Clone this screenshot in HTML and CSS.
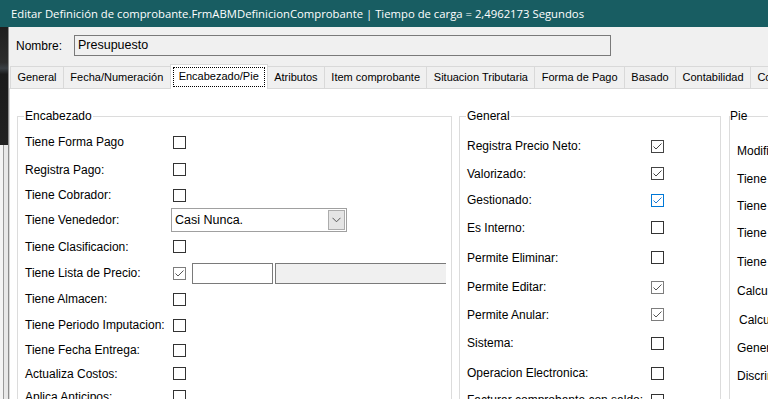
FILE: index.html
```html
<!DOCTYPE html>
<html lang="es">
<head>
    <meta charset="UTF-8">
    <title>Editar Definición de comprobante</title>
    <link rel="stylesheet" href="styles.css">
</head>
<body>
    <div class="titlebar">Editar Definición de comprobante.FrmABMDefinicionComprobante | Tiempo de carga = 2,4962173 Segundos</div>
    <div class="window">
        <div class="behind">
            <div class="behind-top"></div>
            <div class="behind-bottom"></div>
        </div>
        <div class="form">
            <div class="name-row">
                <span class="name-label">Nombre:</span>
                <div class="textbox readonly">Presupuesto</div>
            </div>

            <div class="tabs">
                <div class="tab">General</div>
                <div class="tab">Fecha/Numeración</div>
                <div class="tab active"><span class="focus">Encabezado/Pie</span></div>
                <div class="tab">Atributos</div>
                <div class="tab">Item comprobante</div>
                <div class="tab">Situacion Tributaria</div>
                <div class="tab">Forma de Pago</div>
                <div class="tab">Basado</div>
                <div class="tab">Contabilidad</div>
                <div class="tab">Comportamiento</div>
            </div>

            <div class="panel">
                <!-- Encabezado -->
                <fieldset class="group enc">
                    <legend>Encabezado</legend>
                    <div class="rows">
                        <div class="row"><span class="lbl">Tiene Forma Pago</span><span class="cb"></span></div>
                        <div class="row"><span class="lbl">Registra Pago:</span><span class="cb"></span></div>
                        <div class="row"><span class="lbl">Tiene Cobrador:</span><span class="cb"></span></div>
                        <div class="row">
                            <span class="lbl">Tiene Venededor:</span>
                            <div class="combo">
                                <span class="combo-text">Casi Nunca.</span>
                                <span class="combo-btn">
                                    <svg width="9" height="6" viewBox="0 0 9 6"><polyline points="0.5,0.8 4.5,4.8 8.5,0.8" fill="none" stroke="#555" stroke-width="1"/></svg>
                                </span>
                            </div>
                        </div>
                        <div class="row"><span class="lbl">Tiene Clasificacion:</span><span class="cb"></span></div>
                        <div class="row">
                            <span class="lbl">Tiene Lista de Precio:</span>
                            <span class="cb dim"><svg width="11" height="11" viewBox="0 0 11 11"><polyline points="1.5,5.5 4,8 9.5,2.5" fill="none" stroke="#555" stroke-width="1"/></svg></span>
                            <div class="textbox small"></div>
                            <div class="textbox wide readonly clipped"></div>
                        </div>
                        <div class="row"><span class="lbl">Tiene Almacen:</span><span class="cb"></span></div>
                        <div class="row"><span class="lbl">Tiene Periodo Imputacion:</span><span class="cb"></span></div>
                        <div class="row"><span class="lbl">Tiene Fecha Entrega:</span><span class="cb"></span></div>
                        <div class="row"><span class="lbl">Actualiza Costos:</span><span class="cb"></span></div>
                        <div class="row"><span class="lbl">Aplica Anticipos:</span><span class="cb"></span></div>
                    </div>
                </fieldset>

                <!-- General -->
                <fieldset class="group gen">
                    <legend>General</legend>
                    <div class="rows">
                        <div class="row"><span class="lbl">Registra Precio Neto:</span><span class="cb on"><svg width="11" height="11" viewBox="0 0 11 11"><polyline points="1.5,5.5 4,8 9.5,2.5" fill="none" stroke="#444" stroke-width="1"/></svg></span></div>
                        <div class="row"><span class="lbl">Valorizado:</span><span class="cb on"><svg width="11" height="11" viewBox="0 0 11 11"><polyline points="1.5,5.5 4,8 9.5,2.5" fill="none" stroke="#444" stroke-width="1"/></svg></span></div>
                        <div class="row"><span class="lbl">Gestionado:</span><span class="cb hot"><svg width="11" height="11" viewBox="0 0 11 11"><polyline points="1.5,5.5 4,8 9.5,2.5" fill="none" stroke="#1f7ad2" stroke-width="1"/></svg></span></div>
                        <div class="row"><span class="lbl">Es Interno:</span><span class="cb"></span></div>
                        <div class="row"><span class="lbl">Permite Eliminar:</span><span class="cb"></span></div>
                        <div class="row"><span class="lbl">Permite Editar:</span><span class="cb dim"><svg width="11" height="11" viewBox="0 0 11 11"><polyline points="1.5,5.5 4,8 9.5,2.5" fill="none" stroke="#555" stroke-width="1"/></svg></span></div>
                        <div class="row"><span class="lbl">Permite Anular:</span><span class="cb dim"><svg width="11" height="11" viewBox="0 0 11 11"><polyline points="1.5,5.5 4,8 9.5,2.5" fill="none" stroke="#555" stroke-width="1"/></svg></span></div>
                        <div class="row"><span class="lbl">Sistema:</span><span class="cb"></span></div>
                        <div class="row"><span class="lbl">Operacion Electronica:</span><span class="cb"></span></div>
                        <div class="row"><span class="lbl">Facturar comprobante con saldo:</span><span class="cb"></span></div>
                    </div>
                </fieldset>

                <!-- Pie -->
                <fieldset class="group pie">
                    <legend>Pie</legend>
                    <div class="rows">
                        <div class="row"><span class="lbl">Modifica Pie:</span></div>
                        <div class="row"><span class="lbl">Tiene Observaciones:</span></div>
                        <div class="row"><span class="lbl">Tiene Descuento:</span></div>
                        <div class="row"><span class="lbl">Tiene Recargo:</span></div>
                        <div class="row"><span class="lbl">Tiene Percepciones:</span></div>
                        <div class="row"><span class="lbl">Calcula Impuestos:</span></div>
                        <div class="row"><span class="lbl shift">Calcula Total:</span></div>
                        <div class="row"><span class="lbl">Genera Asiento:</span></div>
                        <div class="row"><span class="lbl">Discrimina IVA:</span></div>
                    </div>
                </fieldset>
            </div>
        </div>
    </div>
</body>
</html>
```

FILE: styles.css
```css
body {
    margin: 0;
    width: 768px;
    height: 399px;
    overflow: hidden;
    font-family: "Liberation Sans", Arial, sans-serif;
    font-size: 12px;
    color: #000;
    background: #f0f0f0;
}

.titlebar {
    height: 27px;
    line-height: 27px;
    padding-left: 11px;
    background: #185d62;
    color: #fff;
    font-family: "Open Sans", sans-serif;
    font-size: 11.3px;
    white-space: nowrap;
    overflow: hidden;
}

.window {
    display: flex;
    height: 372px;
}

/* la ventana de atras que asoma a la izquierda */
.behind {
    width: 9px;
    flex-shrink: 0;
    display: flex;
    flex-direction: column;
    border-right: 1px solid #8c8c8c;
    box-sizing: border-box;
}

.behind-top {
    height: 118px;
    background: linear-gradient(180deg, #1e1e1e 0%, #2c2c2c 30%, #3a3f44 35%, #1b1b1b 40%, #222 100%);
}

.behind-bottom {
    flex: 1;
    background: #e8e8e8;
    border-left: 3px solid #f4f4f4;
    box-shadow: inset 1px 0 0 #9a9a9a;
}

.form {
    flex: 1;
    min-width: 0;
    display: flex;
    flex-direction: column;
    background: #f0f0f0;
}

.name-row {
    height: 37px;
    display: flex;
    align-items: center;
    padding-left: 7px;
}

.name-label {
    width: 58px;
    flex-shrink: 0;
}

.textbox {
    box-sizing: border-box;
    height: 21px;
    border: 1px solid #7a7a7a;
    background: #fff;
    line-height: 19px;
    padding-left: 3px;
    font-size: 12.5px;
    flex-shrink: 0;
}

.textbox.readonly {
    background: #f0f0f0;
}

.name-row .textbox {
    width: 537px;
}

/* pestañas */
.tabs {
    height: 24px;
    display: flex;
    align-items: flex-end;
    padding-left: 1px;
    font-size: 11px;
    white-space: nowrap;
}

.tab {
    height: 22px;
    box-sizing: border-box;
    line-height: 21px;
    padding: 0 6.4px;
    border: 1px solid #d9d9d9;
    border-bottom: none;
    margin-right: -1px;
    background: #f0f0f0;
    flex-shrink: 0;
}

.tab.active {
    height: 25px;
    margin-bottom: -1px;
    padding: 0 2px;
    background: #fff;
    position: relative;
    z-index: 1;
    line-height: 1;
}

.tab .focus {
    display: inline-block;
    margin-top: 2px;
    padding: 3px 5px 4px;
    border: 1px dotted #000;
}

.panel {
    flex: 1;
    display: flex;
    align-items: flex-start;
    background: #fff;
    border-top: 1px solid #d9d9d9;
    border-left: 1px solid #d9d9d9;
    padding-top: 20px;
    overflow: hidden;
}

/* cajas de grupo */
.group {
    margin: 0;
    padding: 0;
    min-width: 0;
    flex-shrink: 0;
    height: 330px;
    box-sizing: border-box;
    border: 1px solid #dcdcdc;
    border-bottom: none;
}

.group legend {
    padding: 0 1px;
    margin-left: 6px;
    line-height: 14px;
    font-size: 12px;
}

.enc {
    margin-left: 7px;
    width: 435px;
}

.gen {
    margin-left: 7px;
    width: 262px;
}

.pie {
    margin-left: 8px;
    width: 200px;
}

.pie legend {
    margin-left: 0;
    padding: 0;
}

.rows {
    display: grid;
    padding-left: 7px;
}

.enc .rows {
    margin-top: 5px;
    grid-template-rows: 28px 27px 24px 26px 27px 26px 26px 26px 24px 23px 23px;
}

.gen .rows {
    margin-top: 9px;
    grid-template-rows: 28px 27px 26px 29px 31px 28px 27px 30px 30px 24px;
}

.pie .rows {
    margin-top: 14px;
    grid-template-rows: 28px 27px 27px 28px 29px 29px 29px 28px 28px;
}

.row {
    display: flex;
    align-items: center;
    white-space: nowrap;
}

.lbl {
    flex-shrink: 0;
}

.enc .lbl {
    width: 148px;
}

.gen .lbl {
    width: 184px;
}

.lbl.shift {
    margin-left: 2px;
}

/* casillas */
.cb {
    width: 13px;
    height: 13px;
    box-sizing: border-box;
    border: 1px solid #333;
    background: #fff;
    flex-shrink: 0;
    display: flex;
}

.cb.on {
    border-color: #444;
}

.cb.dim {
    border-color: #7d7d7d;
}

.cb.hot {
    border-color: #0078d7;
}

.combo {
    box-sizing: border-box;
    width: 176px;
    height: 24px;
    margin-left: -2px;
    border: 1px solid #a0a0a0;
    background: #fff;
    display: flex;
    align-items: center;
    justify-content: space-between;
    padding: 0 1px 0 3px;
    font-size: 12.5px;
}

.combo-btn {
    box-sizing: border-box;
    width: 17px;
    height: 20px;
    background: #e5e5e5;
    border: 1px solid #acacac;
    display: flex;
    align-items: center;
    justify-content: center;
}

.textbox.small {
    width: 81px;
    margin-left: 6px;
}

.textbox.wide {
    width: 171px;
    margin-left: 2px;
}

.textbox.clipped {
    border-right: none;
}
```
